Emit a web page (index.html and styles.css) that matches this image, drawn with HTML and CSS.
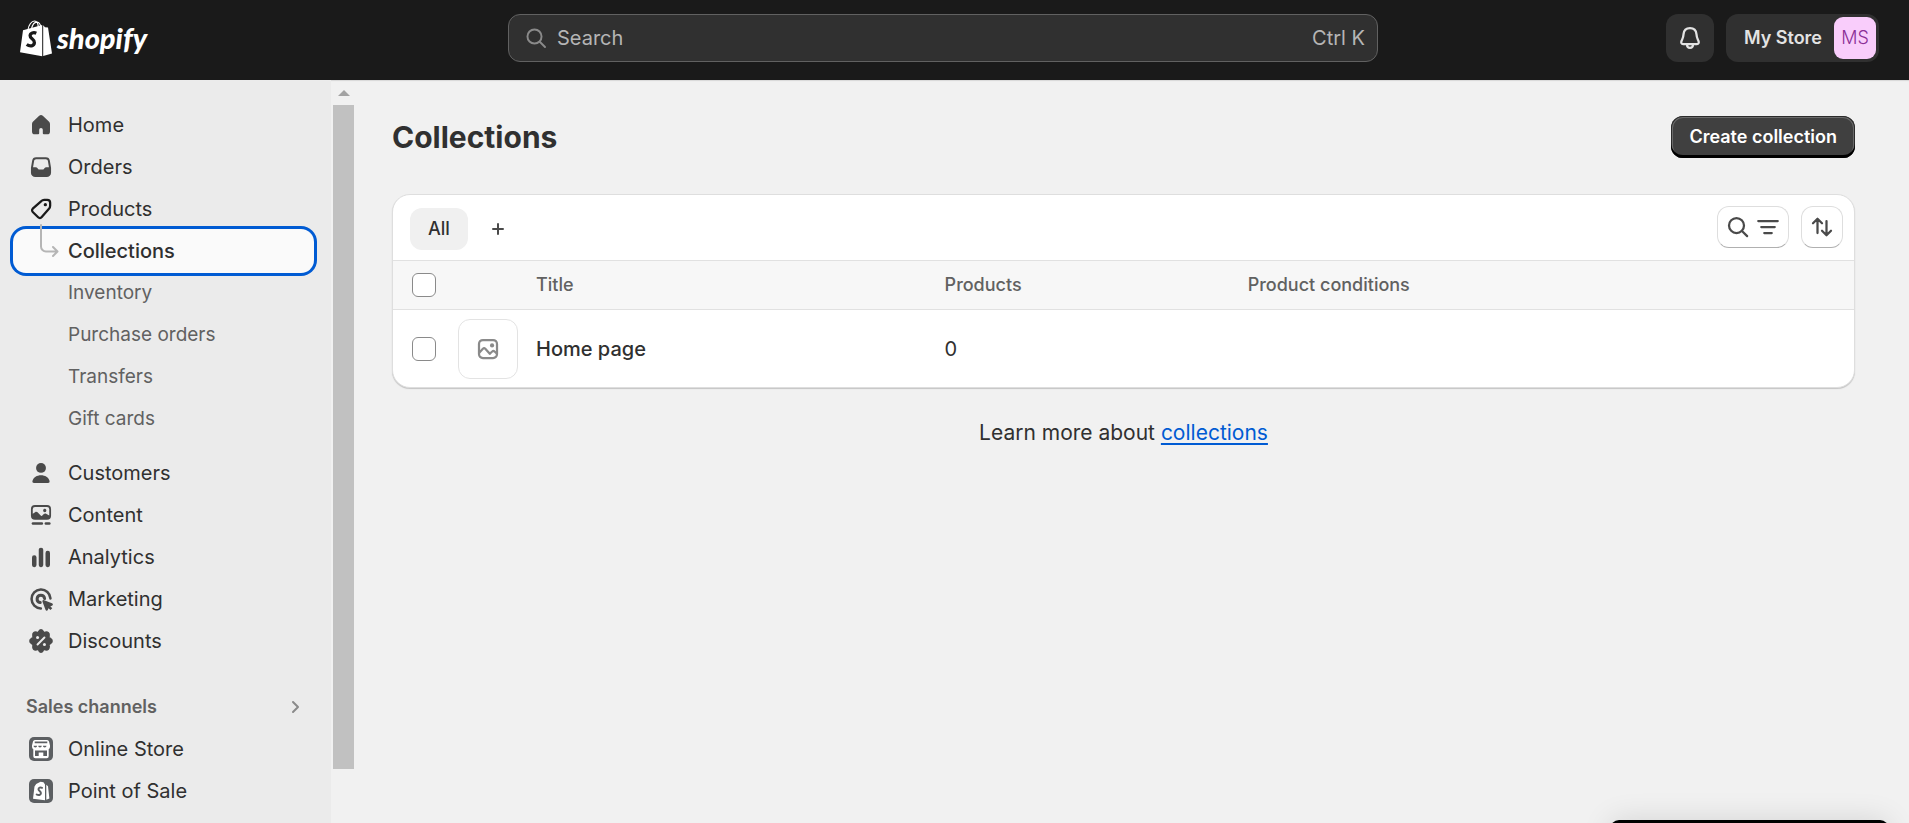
FILE: index.html
```html
<!DOCTYPE html>
<html lang="en">
<head>
<meta charset="utf-8">
<title>Collections · My Store</title>
<link rel="stylesheet" href="styles.css">
</head>
<body>
<header class="topbar">
  <a class="brand" href="#" aria-label="Shopify">
    <svg class="brand-bag" viewBox="0 0 32 37" aria-hidden="true">
      <path fill="none" stroke="#fff" stroke-width="1.2" d="M7.800 10.500C8.600 4.500 11.800 1 14.500 1c2.800 0 3.800 3 3.800 7M11.500 9C12.500 4.500 15 2 17.200 2.200c2 .2 3 2 3.600 4.500"/>
      <path fill="#fff" d="M3 10.200 22.200 5v31.300L0 32.200zM23.200 5.300l1.800 1.900 3 .3 4 25.900-8.800 2.700z"/>
      <path fill="none" stroke="#1a1a1a" stroke-width="3.300" d="M16.300 13.200c-2.700-1.200-6-.2-6.200 2.500-.2 2.900 4.500 3.300 4.300 6.900-.2 3.600-4.400 4.200-7.700 1.900"/>
    </svg>
    <span class="brand-name">shopify</span>
  </a>
  <label class="search">
    <svg class="icon" viewBox="0 0 20 20" aria-hidden="true"><circle cx="9" cy="9" r="4.700"/><path d="m12.500 12.500 3.500 3.500"/></svg>
    <input class="search-input" type="search" placeholder="Search" aria-label="Search">
    <span class="search-keys">Ctrl K</span>
  </label>
  <div class="topbar-actions">
    <button class="bell" type="button" aria-label="Notifications">
      <svg class="icon" viewBox="0 0 20 20" aria-hidden="true"><path d="M10 3.400c-2.500 0-4.100 1.700-4.300 4-.2 2.700-.8 3.300-1.300 4.500-.6 1.100-.1 2.200 1 2.200h9.200c1.100 0 1.600-1.100 1-2.200-.5-1.200-1.100-1.800-1.300-4.500-.2-2.300-1.800-4-4.300-4zM8 14.300c0 1.300.8 2.200 2 2.200s2-.9 2-2.200"/></svg>
    </button>
    <button class="store" type="button">My Store <span class="avatar">MS</span></button>
  </div>
</header>

<div class="frame">
  <nav class="sidebar" aria-label="Main">
    <ul class="nav-list">
      <li><a class="nav-item" href="#">
        <svg class="icon icon-solid" viewBox="0 0 20 20" aria-hidden="true"><path d="M8.800 3.900a1.700 1.700 0 0 1 2.400 0l4.200 4c.4.400.6.900.6 1.400v5a1.900 1.900 0 0 1-1.900 1.900h-2.200a.7.700 0 0 1-.7-.7v-2.300a1.200 1.200 0 0 0-2.400 0v2.300a.7.700 0 0 1-.7.700H5.900A1.900 1.900 0 0 1 4 14.300v-5c0-.5.200-1 .6-1.400z"/></svg>
        Home</a></li>
      <li><a class="nav-item" href="#">
        <svg class="icon icon-solid" viewBox="0 0 20 20" aria-hidden="true"><path fill-rule="evenodd" d="M6.800 3.500h6.400a2.700 2.700 0 0 1 2.700 2.300l.8 4.700v3.300a2.900 2.900 0 0 1-2.900 2.900H6.200a2.900 2.900 0 0 1-2.900-2.900v-3.300l.8-4.700a2.700 2.700 0 0 1 2.700-2.300zm0 1.300c-.7 0-1.300.5-1.400 1.200l-.7 4.200h1.800c.5 0 .9.200 1.200.6l.4.500c.2.300.5.400.8.400h2.200c.3 0 .6-.1.800-.4l.4-.5c.3-.4.700-.6 1.200-.6h1.800L14.600 6c-.1-.7-.7-1.200-1.400-1.200z"/></svg>
        Orders</a></li>
      <li><a class="nav-item" href="#">
        <svg class="icon icon-dark" viewBox="0 0 20 20" aria-hidden="true"><path d="M10.200 4.700c.5-.5 1.200-.8 1.900-.8h2.100a1.900 1.900 0 0 1 1.900 1.900v2c0 .8-.3 1.500-.8 2.100l-4.800 5.500c-.7.800-1.700.8-2.400.1l-3.600-3.500c-.6-.6-.6-1.600 0-2.200z"/><circle class="fill" cx="12.900" cy="7.100" r="1.100"/></svg>
        Products</a></li>
      <li class="nav-current"><a class="nav-item nav-sub nav-selected" href="#" aria-current="page">Collections</a>
        <svg class="nav-branch" viewBox="0 0 20 33" aria-hidden="true"><path d="M2 2v21.500a5 5 0 0 0 5 5h10.500M14 24l4.500 4.500L14 33"/></svg></li>
      <li><a class="nav-item nav-sub" href="#">Inventory</a></li>
      <li><a class="nav-item nav-sub" href="#">Purchase orders</a></li>
      <li><a class="nav-item nav-sub" href="#">Transfers</a></li>
      <li><a class="nav-item nav-sub" href="#">Gift cards</a></li>
    </ul>
    <ul class="nav-list nav-group">
      <li><a class="nav-item" href="#">
        <svg class="icon icon-solid" viewBox="0 0 20 20" aria-hidden="true"><circle cx="10" cy="6.600" r="3.300"/><path d="M4.300 15.300c.6-2.400 3-3.800 5.700-3.800s5.100 1.400 5.700 3.800c.2.800-.3 1.300-1 1.300H5.300c-.7 0-1.200-.5-1-1.300z"/></svg>
        Customers</a></li>
      <li><a class="nav-item" href="#">
        <svg class="icon icon-solid" viewBox="0 0 20 20" aria-hidden="true"><path fill-rule="evenodd" d="M6 3.400h8a2.700 2.700 0 0 1 2.700 2.700v4.400a2.700 2.700 0 0 1-2.700 2.700H6a2.700 2.700 0 0 1-2.700-2.700V6.100A2.700 2.700 0 0 1 6 3.400zm0 1.200A1.500 1.500 0 0 0 4.500 6.100v3.100l1.600-1.100c.5-.4 1.200-.3 1.600.1l2.100 2.200c.3.300.6.300.9.100l1.200-1.200c.4-.4 1-.5 1.500-.2l2.100 1.200V6.100A1.500 1.500 0 0 0 14 4.600zm6.500 1.300a1.100 1.100 0 1 1 0 2.200 1.100 1.100 0 0 1 0-2.200z"/><rect x="3.800" y="14.900" width="7.600" height="1.600" rx=".8"/><rect x="12.400" y="14.900" width="4" height="1.600" rx=".8"/></svg>
        Content</a></li>
      <li><a class="nav-item" href="#">
        <svg class="icon icon-solid" viewBox="0 0 20 20" aria-hidden="true"><rect x="4" y="8.900" width="3" height="7.900" rx="1.400"/><rect x="8.500" y="3.800" width="3" height="13" rx="1.400"/><rect x="13" y="5.900" width="3" height="10.900" rx="1.400"/></svg>
        Analytics</a></li>
      <li><a class="nav-item" href="#">
        <svg class="icon" viewBox="0 0 20 20" aria-hidden="true"><path class="thick" d="M16.300 9.600A6.300 6.300 0 1 0 9.900 16.300"/><path class="thicker" d="M12.400 9.700A2.500 2.500 0 1 0 9.500 12.400"/><path class="fill" d="M11 11.900c-.3-.8.300-1.400 1.100-1.100l5.200 2.100c.9.300.8 1.300 0 1.600l-1.100.4 1.300 1.300-1.200 1.200-1.300-1.300-.4 1.100c-.3.800-1.300.8-1.600 0z"/></svg>
        Marketing</a></li>
      <li><a class="nav-item" href="#">
        <svg class="icon icon-solid" viewBox="0 0 20 20" aria-hidden="true"><path class="edge" d="M8.900 3.500c.5-1 1.700-1 2.200 0l.5 1.200 1.400-.4c1.500-.3 2.500.7 2.200 2.200l-.1 1.200 1.200.9c1.200.7 1.200 2.100 0 2.800l-1.200.9.100 1.200c.3 1.500-.7 2.500-2.200 2.200l-1.400-.4-.5 1.200c-.5 1-1.700 1-2.200 0l-.5-1.200-1.400.4c-1.500.3-2.500-.7-2.200-2.200l.1-1.200-1.200-.9c-1.200-.7-1.200-2.100 0-2.800l1.200-.9-.1-1.200C4.500 5 5.500 4 7 4.300l1.400.4z"/><path class="cut" d="M7.700 12.300l4.600-4.600"/><circle class="cut-fill" cx="7.700" cy="7.700" r="1"/><circle class="cut-fill" cx="12.300" cy="12.300" r="1"/></svg>
        Discounts</a></li>
    </ul>
    <button class="nav-heading" type="button">Sales channels
      <svg class="chevron" viewBox="0 0 12 16" aria-hidden="true"><path d="m4 3 5 5-5 5"/></svg>
    </button>
    <ul class="nav-list">
      <li><a class="nav-item" href="#">
        <svg class="icon icon-app" viewBox="0 0 30 30" aria-hidden="true"><rect class="tile" x="3" y="3" width="24" height="24" rx="5"/><path fill-rule="evenodd" d="M9 6h12a2 2 0 0 1 2 1.500l1 4v1.200a3 3 0 0 1-1.300 2.500v7a2 2 0 0 1-2 2H9.300a2 2 0 0 1-2-2v-7A3 3 0 0 1 6 12.700v-1.200l1-4A2 2 0 0 1 9 6zm-.3 1.500v1.800h12.600V7.500zM7.500 11.700a1.800 1.800 0 0 0 3.600 0zm4.700 0a1.800 1.800 0 0 0 3.600 0zm4.700 0a1.800 1.800 0 0 0 3.600 0zM9 16.500V22h3.700v-3.500h4.600V22H21v-5.500z"/></svg>
        Online Store</a></li>
      <li><a class="nav-item" href="#">
        <svg class="icon icon-app" viewBox="0 0 30 30" aria-hidden="true"><rect class="tile" x="3" y="3" width="24" height="24" rx="5"/><path d="M8.500 10.500 10.200 8l4.300-2.200 3 .5 1.500 2.200v15.700L7 22.700zM20.300 8.800l1.700 1.500 1.400 12.200-3.100 1.300z"/><path class="mark" d="M16 11.800c-1.600-.8-3.500-.2-3.500 1.400 0 1.700 2.500 2 2.400 4-.1 2-2.500 2.400-4.200 1.300"/></svg>
        Point of Sale</a></li>
    </ul>
  </nav>
  <div class="scrollbar" aria-hidden="true">
    <svg class="scroll-arrow" viewBox="0 0 12 6"><path fill="#a3a3a3" d="M6 0l6 6H0z"/></svg>
    <div class="scroll-thumb"></div>
  </div>

  <main class="main">
    <div class="page-head">
      <h1 class="page-title">Collections</h1>
      <button class="primary" type="button">Create collection</button>
    </div>
    <section class="card">
      <div class="toolbar">
        <button class="tab" type="button">All</button>
        <button class="add" type="button" aria-label="Add view"><svg class="plus" viewBox="0 0 12 12" aria-hidden="true"><path d="M6 1v10M1 6h10"/></svg></button>
        <div class="tools">
          <button class="tool" type="button" aria-label="Search and filter">
            <svg class="icon" viewBox="0 0 20 20" aria-hidden="true"><circle cx="9" cy="9" r="5"/><path d="m12.800 12.800 3.300 3.300"/></svg>
            <svg class="icon" viewBox="0 0 20 20" aria-hidden="true"><path d="M3.500 6h13M5.500 10h9M7.500 14h5"/></svg>
          </button>
          <button class="tool" type="button" aria-label="Sort">
            <svg class="icon" viewBox="0 0 20 20" aria-hidden="true"><path d="M7 14V4.500M4 7.500l3-3 3 3M13 6v9.500M10 12.500l3 3 3-3"/></svg>
          </button>
        </div>
      </div>
      <table class="table">
        <colgroup><col class="col-check"><col class="col-thumb"><col class="col-title"><col class="col-products"><col class="col-conditions"></colgroup>
        <thead>
          <tr>
            <th><input class="check" type="checkbox" aria-label="Select all collections"></th>
            <th></th>
            <th scope="col">Title</th>
            <th scope="col">Products</th>
            <th scope="col">Product conditions</th>
          </tr>
        </thead>
        <tbody>
          <tr>
            <td><input class="check" type="checkbox" aria-label="Select Home page"></td>
            <td><div class="thumb"><svg class="icon" viewBox="0 0 20 20" aria-hidden="true"><rect x="4" y="4" width="12" height="12" rx="2.600"/><path d="m4.300 12.300 2.300-2.500c.5-.5 1.100-.5 1.600 0l3 3.400 1.600-1.500c.5-.5 1.100-.5 1.600 0l1.400 1.300"/><circle class="fill" cx="12.700" cy="7.600" r="1.400"/></svg></div></td>
            <td><a class="name" href="#">Home page</a></td>
            <td>0</td>
            <td></td>
          </tr>
        </tbody>
      </table>
    </section>
    <p class="learn">Learn more about <a class="link" href="#">collections</a></p>
  </main>
</div>
<div class="dock"></div>
</body>
</html>
```
FILE: styles.css
```css
* { box-sizing: border-box; }
body {
  margin: 0;
  height: 100vh;
  overflow: hidden;
  display: flex;
  flex-direction: column;
  background: #f1f1f1;
  color: #303030;
  font: 400 20px/30px Inter, "Liberation Sans", sans-serif;
}
button, input { font: inherit; color: inherit; }
button { border: 0; padding: 0; background: none; }
a { color: inherit; text-decoration: none; }

.icon {
  flex: none;
  width: 30px;
  height: 30px;
  fill: none;
  stroke: #4a4a4a;
  stroke-width: 1.5;
  stroke-linecap: round;
  stroke-linejoin: round;
}
.icon-solid { fill: #4a4a4a; stroke: none; }
.icon-dark { stroke: #1a1a1a; }
.icon-app { fill: #fff; stroke: none; }
.icon .fill { fill: #4a4a4a; stroke: none; }
.icon-dark .fill { fill: #1a1a1a; }
.icon .thick { stroke-width: 1.7; }
.icon .thicker { stroke-width: 2; }
.icon .edge { stroke: #4a4a4a; stroke-width: 1.4; }
.icon .cut { stroke: #ebebeb; stroke-width: 1.3; }
.icon .cut-fill { fill: #ebebeb; }
.icon .tile { fill: #5c5f62; }
.icon .mark { fill: none; stroke: #5c5f62; stroke-width: 2; }

.topbar {
  flex: none;
  height: 80px;
  padding: 0 30px 4px 7px;
  display: grid;
  grid-template-columns: 1fr minmax(300px, 870px) 1fr;
  align-items: center;
  background: #1a1a1a;
}
.brand { display: flex; align-items: center; gap: 5px; padding-left: 13px; color: #fff; }
.brand-bag { width: 32px; height: 37px; }
.brand-name { font: italic 900 29px/36px Lato, "Open Sans", sans-serif; }
.search {
  display: flex;
  align-items: center;
  height: 48px;
  padding: 0 12px;
  gap: 6px;
  border: 1px solid #616161;
  border-radius: 12px;
  background: #303030;
  color: #b5b5b5;
}
.search .icon { stroke: #8a8a8a; stroke-width: 1.3; }
.search-input { flex: 1; min-width: 0; border: 0; padding: 0; background: none; outline: 0; }
.search-input::placeholder { color: #b5b5b5; opacity: 1; }
.topbar-actions { display: flex; justify-content: flex-end; gap: 12px; }
.bell {
  width: 48px;
  height: 48px;
  display: grid;
  place-items: center;
  border-radius: 12px;
  background: #303030;
}
.bell .icon { stroke: #e3e3e3; }
.store {
  display: flex;
  align-items: center;
  gap: 12px;
  height: 48px;
  padding: 0 3px 0 18px;
  border-radius: 12px;
  background: #303030;
  color: #e3e3e3;
  font-size: 18px;
  font-weight: 600;
}
.avatar {
  width: 42px;
  height: 42px;
  border-radius: 9px;
  background: #f9cdfb;
  color: #8b2f96;
  font-weight: 300;
  line-height: 42px;
}

.frame { flex: 1; min-height: 0; display: flex; box-shadow: inset 0 2px 1px -1px #d8d8d8; }
.sidebar { flex: none; width: 331px; padding: 24px 18px 0 14px; background: #ebebeb; overflow: hidden; }
.nav-list { list-style: none; margin: 0; padding: 0; }
.nav-group { margin-top: 12px; }
.nav-item {
  display: flex;
  align-items: center;
  gap: 12px;
  height: 42px;
  padding: 0 12px;
  border-radius: 12px;
}
.nav-sub { padding-left: 54px; color: #616161; font-size: 19px; }
.nav-current { position: relative; }
.nav-selected {
  background: #fafafa;
  color: #303030;
  font-size: 20px;
  font-weight: 500;
  box-shadow: 0 0 0 1px #fafafa, 0 0 0 4px #005bd3;
}
.nav-branch {
  position: absolute;
  left: 25px;
  top: -7px;
  width: 20px;
  height: 33px;
  fill: none;
  stroke: #b5b5b5;
  stroke-width: 2;
  stroke-linecap: round;
  stroke-linejoin: round;
  overflow: visible;
}
.nav-heading {
  display: flex;
  justify-content: space-between;
  align-items: center;
  width: 100%;
  height: 42px;
  margin-top: 24px;
  padding: 0 12px;
  color: #616161;
  font-size: 18px;
  font-weight: 600;
}
.nav-heading { padding-right: 12px; }
.chevron { width: 12px; height: 16px; fill: none; stroke: #8a8a8a; stroke-width: 2; stroke-linecap: round; stroke-linejoin: round; }

.scrollbar { flex: none; width: 23px; padding: 10px 0 54px 2px; display: flex; flex-direction: column; gap: 9px; }
.scroll-arrow { width: 12px; height: 6px; align-self: center; }
.scroll-thumb { flex: 1; background: #c1c1c1; }

.main { flex: 1; min-width: 0; padding: 36px 54px 0 38px; }
.page-head { display: flex; justify-content: space-between; align-items: center; margin-bottom: 36px; }
.page-title { margin: 0; font-size: 30px; line-height: 36px; font-weight: 700; }
.primary {
  height: 42px;
  padding: 0 18px;
  border-radius: 12px;
  background: #404040;
  color: #fff;
  font-size: 18px;
  font-weight: 600;
  box-shadow: inset 0 -3px 0 #000, inset 0 0 0 1px #2b2b2b, inset 0 0 0 2px #6a6a6a;
}
.card {
  border-radius: 18px;
  background: #fff;
  overflow: hidden;
  border: 1px solid #dedede;
  box-shadow: 0 1px 1px #c4c4c4;
}
.toolbar { display: flex; align-items: center; gap: 9px; height: 65px; padding: 2px 11px 0 17px; }
.tab { height: 42px; padding: 0 18px; border-radius: 12px; background: #f0f0f0; font-size: 18px; font-weight: 500; }
.add { width: 42px; height: 42px; display: grid; place-items: center; }
.plus { width: 12px; height: 12px; fill: none; stroke: #4a4a4a; stroke-width: 2; stroke-linecap: round; }
.tools { display: flex; gap: 12px; margin-left: auto; padding-bottom: 4px; }
.tool {
  display: flex;
  align-items: center;
  height: 42px;
  padding: 0 5px;
  border: 1px solid #dedede;
  border-bottom-color: #b0b0b0;
  border-radius: 12px;
  background: #fff;
}
.table { width: 100%; border-collapse: collapse; table-layout: fixed; }
.col-check { width: 65px; }
.col-thumb { width: 78px; }
.col-title { width: 31%; }
.col-products { width: 23%; }
.col-conditions { width: 46%; }
.table th, .table td { padding: 0; text-align: left; vertical-align: middle; }
.table th {
  height: 49px;
  border-top: 1px solid #e1e1e1;
  border-bottom: 1px solid #e1e1e1;
  background: #f7f7f7;
  color: #616161;
  font-size: 18px;
  font-weight: 500;
}
.table td { height: 77px; padding-top: 2px; }
.name { font-weight: 500; }
.check {
  appearance: none;
  display: block;
  width: 24px;
  height: 24px;
  margin: 0 0 0 19px;
  border: 1px solid #8a8a8a;
  border-radius: 6px;
  background: #fff;
}
.thumb { display: grid; place-items: center; width: 60px; height: 60px; border: 1px solid #e3e3e3; border-radius: 12px; }
.thumb .icon { stroke: #8a8a8a; }
.thumb .fill { fill: #8a8a8a; }
.learn { margin: 30px 0 0; text-align: center; font-size: 21px; line-height: 30px; }
.link { color: #005bd3; text-decoration: underline; text-decoration-thickness: 2px; text-underline-offset: 3px; }

.dock {
  position: fixed;
  right: 20px;
  bottom: -47px;
  width: 279px;
  height: 50px;
  border-radius: 9px;
  background: #000;
  box-shadow: 0 0 30px rgba(0, 0, 0, .12);
}
```
